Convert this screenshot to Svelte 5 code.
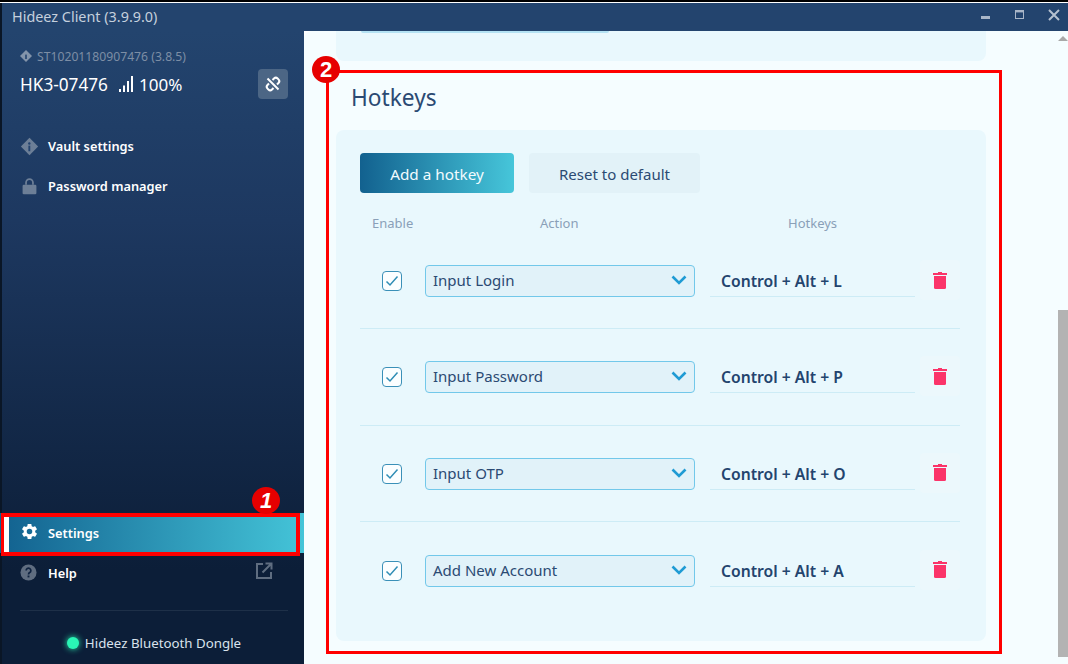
<script>
  const rows = [
    { action: 'Input Login', keys: 'Control + Alt + L' },
    { action: 'Input Password', keys: 'Control + Alt + P' },
    { action: 'Input OTP', keys: 'Control + Alt + O' },
    { action: 'Add New Account', keys: 'Control + Alt + A' }
  ];
</script>

<div class="window">
  <div class="titlebar">
    <span class="title">Hideez Client (3.9.9.0)</span>
    <div class="controls">
      <svg width="12" height="12" viewBox="0 0 12 12"><rect x="1" y="7" width="9" height="3" fill="#a9b6c8"/></svg>
      <svg width="12" height="12" viewBox="0 0 12 12"><rect x="1.500" y="1.500" width="8" height="8" fill="none" stroke="#a9b6c8" stroke-width="1"/><rect x="1" y="1" width="9" height="2.400" fill="#a9b6c8"/></svg>
      <svg width="12" height="12" viewBox="0 0 12 12"><path d="M1 1l10 10M11 1L1 11" stroke="#b6c1d0" stroke-width="2" fill="none"/></svg>
    </div>
  </div>
  <div class="body">
    <aside class="side">
      <div class="device">
        <div class="serial">
          <svg width="12" height="12" viewBox="0 0 12 12"><path d="M6 0l6 6-6 6-6-6z" fill="#8394aa"/><rect x="5.200" y="4.600" width="1.600" height="4.400" fill="#24446f"/></svg>
          <span>ST10201180907476 (3.8.5)</span>
        </div>
        <div class="name-row">
          <span class="name">HK3-07476</span>
          <svg class="bars" width="15" height="17" viewBox="0 0 15 17"><rect x="0" y="13" width="2" height="3" fill="#fff"/><rect x="4" y="9.500" width="2" height="6.500" fill="#fff"/><rect x="8" y="5" width="2" height="11" fill="#fff"/><rect x="12" y="0" width="2" height="16" fill="#fff"/></svg>
          <span class="pct">100%</span>
          <span class="unlink">
            <svg width="18" height="18" viewBox="0 0 18 18" fill="none" stroke="#fff" stroke-width="2"><path d="M8.500 5l1.500-1.500a2.600 2.600 0 0 1 3.600 0l.9.900a2.600 2.600 0 0 1 0 3.600L13 9.500"/><path d="M9.500 13L8 14.500a2.600 2.600 0 0 1-3.600 0l-.9-.9a2.600 2.600 0 0 1 0-3.600L5 8.500"/><path d="M3.500 3.500l11 11"/></svg>
          </span>
        </div>
      </div>

      <nav class="nav">
        <div class="item">
          <svg width="19" height="19" viewBox="0 0 22 22"><path d="M11 1l10 10-10 10L1 11z" fill="#6d7f97"/><circle cx="10.800" cy="7.500" r="1.400" fill="#24446f"/><rect x="9.700" y="10" width="2.200" height="6.500" fill="#24446f"/></svg>
          <span>Vault settings</span>
        </div>
        <div class="item">
          <svg width="19" height="19" viewBox="0 0 22 22"><path d="M7 9V6.500a4 4 0 0 1 8 0V9" fill="none" stroke="#6d7f97" stroke-width="2"/><rect x="3" y="9" width="16" height="11" rx="1.500" fill="#6d7f97"/></svg>
          <span>Password manager</span>
        </div>
      </nav>

      <div class="bottom">
        <div class="item active">
          <svg width="19" height="19" viewBox="0 0 24 24"><path fill="#fff" d="M19.140 12.940a7.500 7.500 0 0 0 0-1.880l2.030-1.580a.5.500 0 0 0 .12-.61l-1.920-3.320a.5.500 0 0 0-.59-.22l-2.390.96a7 7 0 0 0-1.620-.94l-.36-2.540a.5.500 0 0 0-.48-.41h-3.840a.5.500 0 0 0-.48.41l-.36 2.540a7 7 0 0 0-1.620.94l-2.390-.96a.5.500 0 0 0-.59.22L2.730 8.870a.5.500 0 0 0 .12.61l2.030 1.580a7.500 7.500 0 0 0 0 1.880l-2.030 1.580a.5.500 0 0 0-.12.61l1.920 3.320c.13.220.38.300.59.220l2.390-.96c.5.380 1.040.7 1.620.94l.36 2.540c.05.240.25.410.48.410h3.840c.24 0 .44-.17.480-.41l.36-2.540a7 7 0 0 0 1.620-.94l2.390.96c.22.080.47 0 .59-.22l1.920-3.320a.5.500 0 0 0-.12-.61zM12 15.500a3.500 3.500 0 1 1 0-7 3.500 3.500 0 0 1 0 7z"/></svg>
          <span>Settings</span>
        </div>
        <div class="item help">
          <svg width="17" height="17" viewBox="0 0 18 18"><circle cx="9" cy="9" r="8.500" fill="#5f6d80"/><path d="M6.500 7a2.500 2.500 0 1 1 3.800 2.100c-.9.500-1.300 1-1.300 2" fill="none" stroke="#0f2340" stroke-width="1.800"/><rect x="8" y="12.200" width="2" height="2" fill="#0f2340"/></svg>
          <span>Help</span>
          <svg class="ext" width="18" height="18" viewBox="0 0 18 18" fill="none" stroke="#5f6d80" stroke-width="2"><path d="M8 2H2v14h14v-6"/><path d="M10.500 1.500h6v6M16 2L7.500 10.500"/></svg>
        </div>
        <div class="rule"></div>
        <div class="dongle"><i class="dot"></i><span>Hideez Bluetooth Dongle</span></div>
      </div>
    </aside>

    <main class="main">
      <div class="prev-card"><div class="prev-input"></div></div>
      <h2>Hotkeys</h2>
      <section class="card">
        <div class="buttons">
          <button class="primary">Add a hotkey</button>
          <button class="secondary">Reset to default</button>
        </div>
        <div class="heads">
          <span class="h-enable">Enable</span>
          <span class="h-action">Action</span>
          <span class="h-keys">Hotkeys</span>
        </div>
        {#each rows as row}
          <div class="row">
            <span class="check">
              <svg width="14" height="12" viewBox="0 0 14 12"><path d="M1.500 6.500l3.500 3.500 7.500-8.500" fill="none" stroke="#2f8db5" stroke-width="1.500"/></svg>
            </span>
            <div class="select">
              <span>{row.action}</span>
              <svg width="16" height="10" viewBox="0 0 16 10"><path d="M1.500 1.500L8 8l6.500-6.500" fill="none" stroke="#1f9bd4" stroke-width="2.600"/></svg>
            </div>
            <div class="keys">{row.keys}</div>
            <span class="trash">
              <svg width="14" height="17" viewBox="0 0 14 17"><path d="M5 0h4v1h5v2H0V1h5z" fill="#fb3469"/><path d="M1 4h12v11.500a1.500 1.500 0 0 1-1.500 1.500h-9A1.500 1.500 0 0 1 1 15.500z" fill="#fb3469"/></svg>
            </span>
          </div>
        {/each}
      </section>
      <div class="scrollbar"><i class="arrow"></i><i class="thumb"></i></div>
    </main>
  </div>

  <div class="mark-one"></div>
  <div class="badge b1">1</div>
  <div class="mark-two"></div>
  <div class="badge b2">2</div>
</div>

<style>
  :global(body) { margin: 0; background: #fff; }
  .window {
    position: relative;
    width: 1068px;
    height: 664px;
    overflow: hidden;
    box-sizing: border-box;
    padding-top: 3px;
    background: linear-gradient(#000 0 2px, #fff 2px 3px);
    font-family: "Noto Sans", "Open Sans", sans-serif;
    display: flex;
    flex-direction: column;
  }
  .titlebar {
    flex: none;
    height: 28px;
    background: #23446e;
    display: flex;
    align-items: center;
    justify-content: space-between;
    padding: 0 8px 0 12px;
    box-sizing: border-box;
    color: #c5d0dd;
    font-size: 14.400px;
    box-shadow: inset 2px 0 #0a1626;
  }
  .title { position: relative; top: -1px; }
  .controls { display: flex; gap: 22px; align-items: center; position: relative; top: -2px; }
  .body { flex: 1; display: flex; min-height: 0; }
  .side {
    width: 304px;
    flex: none;
    display: flex;
    flex-direction: column;
    background: linear-gradient(#23446e, #1d3860 30%, #0c1e38 85%);
    box-shadow: inset 2px 0 #0a1626;
    color: #fff;
  }
  .device { padding: 15px 16px 0 20px; }
  .serial { display: flex; align-items: center; gap: 5px; color: #7d8ea5; font-size: 12.200px; height: 20px; }
  .name-row { display: flex; align-items: center; height: 38px; margin-top: -1px; }
  .name { font-size: 17.200px; width: 99px; }
  .bars { margin-right: 5px; }
  .pct { font-size: 17px; }
  .unlink {
    margin-left: auto;
    width: 30px;
    height: 30px;
    border-radius: 4px;
    background: #4c6685;
    display: flex;
    align-items: center;
    justify-content: center;
  }
  .nav { margin-top: 23px; }
  .item {
    height: 40px;
    display: flex;
    align-items: center;
    gap: 9px;
    padding-left: 20px;
    font-size: 12.800px;
    font-weight: 600;
    box-sizing: border-box;
  }
  .item svg { flex: none; }
  .bottom { margin-top: auto; }
  .active {
    position: relative;
    background: linear-gradient(90deg, #12618f, #44c4d8);
  }
  .active svg { position: relative; top: -2px; }
  .help { gap: 11px; }
  .help svg { position: relative; top: -1px; }
  .help .ext { margin-left: auto; margin-right: 31px; top: -2px; }
  .rule { height: 1px; background: #1e3048; margin: 17px 16px 0 20px; }
  .dongle {
    height: 53px;
    display: flex;
    align-items: center;
    justify-content: center;
    gap: 6px;
    font-size: 13.300px;
    color: #d9e2ec;
    padding: 10px 0 0 4px;
    box-sizing: border-box;
  }
  .dot {
    width: 12px;
    height: 12px;
    border-radius: 50%;
    background: #2af5b5;
    box-shadow: 0 0 6px #2af5b5;
  }
  .main {
    position: relative;
    flex: 1;
    background: #f5fdff;
    border-top-left-radius: 8px;
    box-sizing: border-box;
    padding-left: 32px;
    padding-right: 82px;
    color: #23446e;
  }
  .prev-card {
    height: 30px;
    background: #e9f8fd;
    border-radius: 0 0 8px 8px;
    padding-left: 25px;
  }
  .prev-input {
    width: 248px;
    height: 2px;
    background: #b4e2f3;
    border-radius: 0 0 4px 4px;
  }
  h2 {
    margin: 0;
    height: 69px;
    display: flex;
    align-items: center;
    padding: 3px 0 0 15px;
    box-sizing: border-box;
    font-size: 22.700px;
    font-weight: 400;
    color: #2b4a73;
  }
  .card {
    height: 511px;
    background: #e9f8fd;
    border-radius: 8px;
    box-sizing: border-box;
    padding: 23px 26px 0 24px;
  }
  .buttons { display: flex; gap: 15px; }
  button {
    height: 40px;
    border: none;
    border-radius: 4px;
    font: inherit;
    font-size: 15px;
    padding: 2px 0 0;
  }
  .primary { width: 154px; color: #f2fbfe; background: linear-gradient(90deg, #12618f, #46c6da); font-size: 15.300px; }
  .secondary { width: 171px; color: #2b4a73; background: #e2f2f8; }
  .heads {
    position: relative;
    height: 24px;
    margin-top: 18px;
    font-size: 13px;
    color: #8aa0b8;
  }
  .heads span { position: absolute; top: 0; line-height: 24px; }
  .h-enable { left: 12px; }
  .h-action { left: 180px; }
  .h-keys { left: 428px; }
  .row {
    height: 96.500px;
    box-sizing: border-box;
    display: flex;
    align-items: center;
    border-bottom: 1px solid #cdecf6;
    padding-top: 1px;
  }
  .heads + .row { height: 94px; padding-top: 0; padding-bottom: 1px; }
  .row:last-child { border-bottom: none; }
  .check {
    width: 18px;
    height: 18px;
    margin-left: 22px;
    border: 1px solid #3a90b8;
    border-radius: 4px;
    background: #fbfeff;
    display: flex;
    align-items: center;
    justify-content: center;
  }
  .select {
    margin-left: 23px;
    border: 1px solid #72c8ea;
    border-radius: 4px;
    background: #e1f2f9;
    display: flex;
    align-items: center;
    justify-content: space-between;
    padding: 0 7px 2px 7px;
    height: 28px;
    width: 254px;
    font-size: 15px;
    color: #2b4a73;
  }
  .select svg { position: relative; top: 0; }
  .keys {
    width: 205px;
    height: 32px;
    box-sizing: border-box;
    margin-left: 15px;
    padding-left: 11px;
    border-bottom: 1px solid #cdecf6;
    font-size: 15.700px;
    font-weight: 600;
    line-height: 32px;
    color: #23446e;
  }
  .trash {
    width: 40px;
    height: 40px;
    margin-left: 5px;
    border-radius: 4px;
    background: #ecf8fc;
    display: flex;
    align-items: center;
    justify-content: center;
    position: relative;
    top: -1px;
  }
  .scrollbar {
    position: absolute;
    right: 0;
    top: 0;
    bottom: 0;
    width: 10px;
  }
  .arrow {
    position: absolute;
    left: 0;
    top: 5px;
    border: 5px solid transparent;
    border-top: 0;
    border-bottom-color: #a8a8a8;
  }
  .thumb {
    position: absolute;
    left: 0;
    top: 279px;
    bottom: 7px;
    width: 10px;
    background: #b3b3b3;
  }
  .mark-one {
    position: absolute;
    left: 1px;
    top: 513px;
    width: 299px;
    height: 43px;
    box-sizing: border-box;
    border: 4px solid #ff0000;
    border-left-width: 3px;
    background: linear-gradient(90deg, #fff 0 5px, transparent 5px);
    background-origin: padding-box;
    background-clip: padding-box;
  }
  .mark-two {
    position: absolute;
    left: 326px;
    top: 70px;
    width: 676px;
    height: 584px;
    box-sizing: border-box;
    border: 3px solid #ff0000;
  }
  .badge {
    position: absolute;
    width: 28px;
    height: 27px;
    border-radius: 50%;
    background: #e60000;
    color: #fff;
    font: 700 22px/27px "Liberation Sans", sans-serif;
    text-align: center;
    z-index: 1;
  }
  .b1 { left: 252px; top: 487px; font-style: italic; }
  .b2 { left: 312px; top: 56px; }
</style>
